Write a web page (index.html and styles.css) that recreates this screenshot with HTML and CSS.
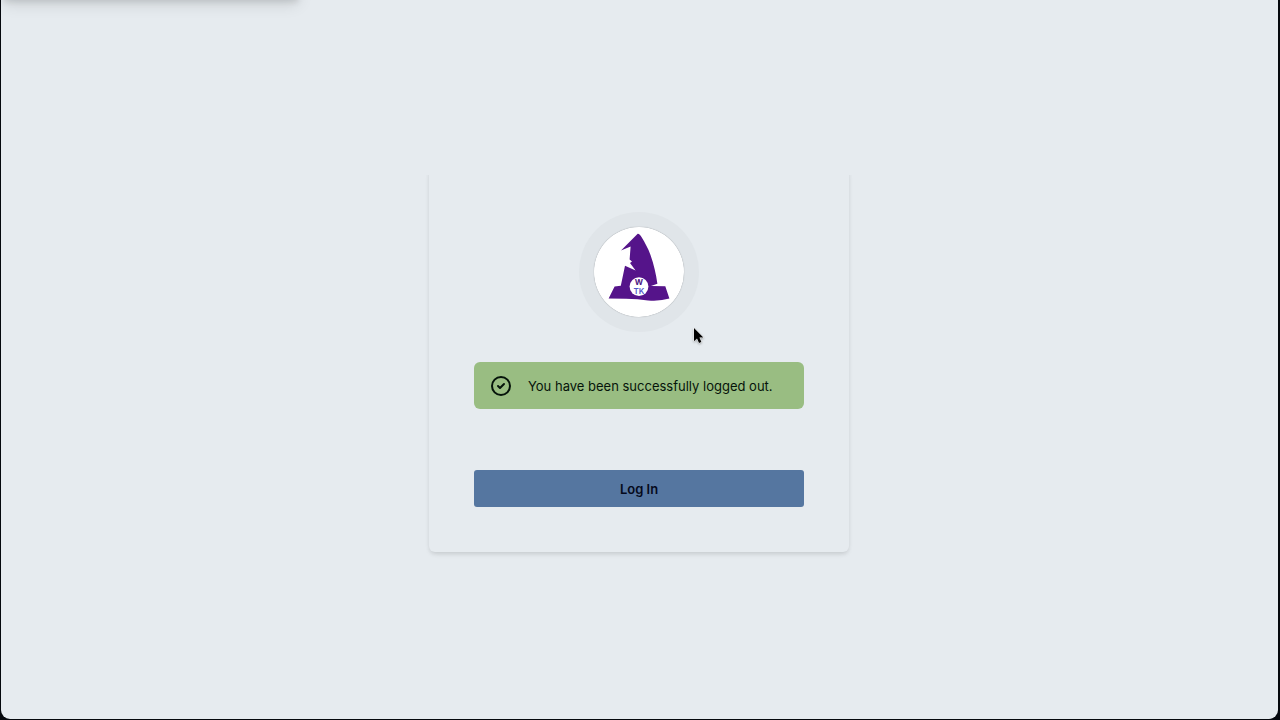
FILE: index.html
```
<!DOCTYPE html>
<html lang="en">
<head>
    <meta charset="utf-8">
    <meta name="viewport" content="width=device-width, initial-scale=1.0">
    <title>Log Out</title>
    <link rel="stylesheet" href="styles.css">
</head>
<body>
    <div class="window">
        <div class="drop-panel"></div>

        <main class="card">
            <div class="logo-ring">
                <svg class="logo" viewBox="0 0 90 90" role="img" aria-label="WTK">
                    <circle cx="45" cy="45" r="45" fill="#fff"/>
                    <path fill="#55148a" d="M43.7 6.8 C45 6.6 46.4 8 47.5 10 C51 16 54 21 56.5 28 C60 38 62 47 63.4 56.8 L57 59 L71.3 59.3 L75.4 71.5 Q66 74.4 54 73.4 Q44 72.2 32 71.8 L14.6 71.4 L20.6 59.6 L26.8 58.8 L31 38.8 L41.6 43.4 L36 36 L38 34.6 L35.6 32.6 L36.6 19.6 L27 23.4 Z"/>
                    <circle cx="45" cy="59.6" r="9.4" fill="#fff"/>
                    <text class="logo-w" x="45" y="58">W</text>
                    <text class="logo-tk" x="45" y="67">TK</text>
                </svg>
            </div>

            <div class="alert" role="alert">
                <svg class="alert-icon" viewBox="0 0 24 24" aria-hidden="true">
                    <circle cx="12" cy="12" r="9"/>
                    <path d="M9 12l2 2 4-4"/>
                </svg>
                <span>You have been successfully logged out.</span>
            </div>

            <button type="button" class="btn">Log In</button>
        </main>

        <svg class="cursor" viewBox="0 0 12 18" aria-hidden="true">
            <path d="M1 1 L1 14.2 L4 11.4 L6 16 L8.4 15 L6.4 10.5 L10.4 10.5 Z"/>
        </svg>
    </div>
</body>
</html>
```
FILE: styles.css
```
* {
    box-sizing: border-box;
}
body {
    margin: 0;
    background: #05080d;
    font-family: Inter, sans-serif;
    font-size: 13px;
    color: #06140a;
}
.window {
    position: relative;
    display: flex;
    align-items: center;
    justify-content: center;
    min-height: calc(100vh - 1px);
    margin: 0 2px 1px 1px;
    padding-right: 1px;
    background: #e6ebef;
    border-radius: 0 0 9px 9px;
    overflow: hidden;
}
/* bottom edge of the panel that is slid off the top */
.drop-panel {
    position: absolute;
    top: -40px;
    left: 3px;
    width: 294px;
    height: 40px;
    box-shadow: 0 2px 6px rgba(0, 0, 0, 0.1), 0 4px 16px rgba(0, 0, 0, 0.12);
}
.card {
    display: flex;
    flex-direction: column;
    width: 100%;
    max-width: 420px;
    padding: 45px;
    border-radius: 6px;
    background: #e6ebef;
    box-shadow: 0 3px 5px -1px rgba(0, 0, 0, 0.12), 0 1px 4px rgba(0, 0, 0, 0.03);
    clip-path: inset(8px -12px -12px -12px);
}
.logo-ring {
    display: flex;
    align-self: center;
    padding: 15px;
    border-radius: 50%;
    background: #e0e5e9;
}
.logo {
    width: 90px;
    height: 90px;
    border-radius: 50%;
    box-shadow: 0 0 1px rgba(0, 0, 0, 0.4);
}
.logo-w,
.logo-tk {
    font-size: 8px;
    text-anchor: middle;
}
.logo-w {
    font-weight: 700;
    fill: #4b1583;
}
.logo-tk {
    font-weight: 600;
    fill: #5257c9;
}
.alert {
    display: flex;
    align-items: center;
    gap: 15px;
    margin-top: 30px;
    padding: 11px 15px;
    min-height: 47px;
    border-radius: 6px;
    background: #99bd82;
    line-height: 24px;
}
.alert-icon {
    flex: none;
    width: 24px;
    height: 24px;
    fill: none;
    stroke: currentColor;
    stroke-width: 2;
    stroke-linecap: round;
    stroke-linejoin: round;
}
.btn {
    height: 37px;
    margin-top: 61px;
    border: none;
    border-radius: 3px;
    background: #5576a0;
    color: #050a1c;
    font-family: inherit;
    font-size: 13px;
    font-weight: 600;
    cursor: pointer;
}
.btn:hover {
    background: #4c6b93;
}
.cursor {
    position: absolute;
    top: 327px;
    left: 692px;
    width: 12px;
    height: 18px;
    fill: #000;
    stroke: #fff;
    stroke-width: 1;
    paint-order: stroke;
    filter: drop-shadow(0 1px 1px rgba(0, 0, 0, 0.3));
}
```
